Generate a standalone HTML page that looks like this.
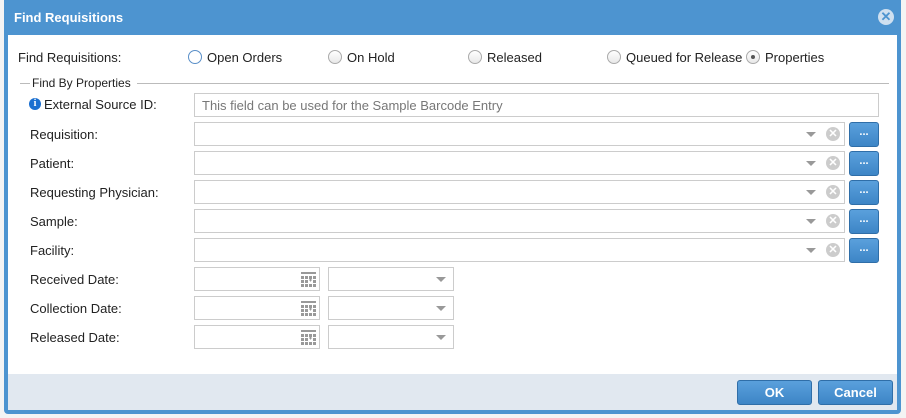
<!DOCTYPE html>
<html><head><style>
*{box-sizing:border-box;margin:0;padding:0}
body{width:906px;height:418px;overflow:hidden;background:#f4f4f4;font-family:"Liberation Sans",sans-serif;font-size:13px;color:#222;position:relative}
.a{position:absolute}
.dlg{left:4px;top:0;width:897px;height:414px;background:#4d94d0;border-radius:0 0 4px 4px}
.body{left:8px;top:35px;width:889px;height:339px;background:#fff}
.foot{left:8px;top:374px;width:889px;height:36px;background:#e1e8f0}
.title{left:14px;top:10px;color:#fff;font-weight:bold;font-size:13px}
.lbl{left:30px}
.inp{border:1px solid #ccc;background:#fff;height:24px}
.rad{width:14px;height:14px;border-radius:50%;border:1px solid #aaa;background:linear-gradient(#fff,#e8e8e8)}
.btn{width:30px;height:25px;background:linear-gradient(#5aa0dc,#3d85c6);border:1px solid #2f6ea8;border-radius:3px;color:#fff;font-weight:bold;text-align:center;line-height:18px;font-size:11px}
.clr{width:14px;height:14px;border-radius:50%;background:#ccc;color:#fff;font-size:11px;line-height:14px;text-align:center;font-weight:bold}
.tri{width:0;height:0;border-left:5px solid transparent;border-right:5px solid transparent;border-top:5px solid #999}
.ok{height:25px;background:linear-gradient(#5aa0dc,#3d85c6);border:1px solid #2f6ea8;border-radius:3px;color:#fff;font-weight:bold;text-align:center;line-height:23px;font-size:13px}
</style></head><body>
<div class="a dlg"></div>
<div class="a body"></div>
<div class="a foot"></div>
<div class="a title">Find Requisitions</div>
<div class="a" style="left:878px;top:9px;width:16px;height:16px;border-radius:50%;background:#cfe0f0;color:#4d94d0;font-size:13px;line-height:16px;text-align:center;font-weight:bold">✕</div>

<div class="a" style="left:18px;top:50px">Find Requisitions:</div>
<div class="a rad" style="left:188px;top:50px;border-color:#5a8fc8;background:#fff"></div><div class="a" style="left:207px;top:50px">Open Orders</div>
<div class="a rad" style="left:328px;top:50px"></div><div class="a" style="left:347px;top:50px">On Hold</div>
<div class="a rad" style="left:468px;top:50px"></div><div class="a" style="left:487px;top:50px">Released</div>
<div class="a rad" style="left:607px;top:50px"></div><div class="a" style="left:626px;top:50px">Queued for Release</div>
<div class="a rad" style="left:746px;top:50px"><div class="a" style="left:4px;top:4px;width:4px;height:4px;border-radius:50%;background:#555"></div></div><div class="a" style="left:765px;top:50px">Properties</div>

<div class="a" style="left:20px;top:83px;width:10px;border-top:1px solid #bbb"></div>
<div class="a" style="left:32px;top:76px;font-size:12px">Find By Properties</div>
<div class="a" style="left:137px;top:83px;width:752px;border-top:1px solid #bbb"></div>

<div class="a" style="left:29px;top:98px;width:12px;height:12px;border-radius:50%;background:#1a6fd0;color:#fff;font-size:10px;line-height:12px;text-align:center;font-weight:bold;font-family:'Liberation Serif',serif">i</div>
<div class="a" style="left:44px;top:97px">External Source ID:</div>
<div class="a inp" style="left:194px;top:93px;width:685px;color:#777;padding:4px 7px">This field can be used for the Sample Barcode Entry</div>

<div class="a lbl" style="top:127px">Requisition:</div>
<div class="a lbl" style="top:156px">Patient:</div>
<div class="a lbl" style="top:185px">Requesting Physician:</div>
<div class="a lbl" style="top:214px">Sample:</div>
<div class="a lbl" style="top:243px">Facility:</div>
<div class="a lbl" style="top:272px">Received Date:</div>
<div class="a lbl" style="top:301px">Collection Date:</div>
<div class="a lbl" style="top:330px">Released Date:</div>

<div class="a inp" style="left:194px;top:122px;width:651px"></div><div class="a tri" style="left:806px;top:132px"></div><div class="a clr" style="left:826px;top:127px">✕</div><div class="a btn" style="left:849px;top:122px">...</div>
<div class="a inp" style="left:194px;top:151px;width:651px"></div><div class="a tri" style="left:806px;top:161px"></div><div class="a clr" style="left:826px;top:156px">✕</div><div class="a btn" style="left:849px;top:151px">...</div>
<div class="a inp" style="left:194px;top:180px;width:651px"></div><div class="a tri" style="left:806px;top:190px"></div><div class="a clr" style="left:826px;top:185px">✕</div><div class="a btn" style="left:849px;top:180px">...</div>
<div class="a inp" style="left:194px;top:209px;width:651px"></div><div class="a tri" style="left:806px;top:219px"></div><div class="a clr" style="left:826px;top:214px">✕</div><div class="a btn" style="left:849px;top:209px">...</div>
<div class="a inp" style="left:194px;top:238px;width:651px"></div><div class="a tri" style="left:806px;top:248px"></div><div class="a clr" style="left:826px;top:243px">✕</div><div class="a btn" style="left:849px;top:238px">...</div>

<svg class="a" style="left:0;top:0" width="906" height="418">
<defs><g id="cal" fill="#999"><rect x="0" y="0" width="15" height="2"/><rect x="0" y="4" width="3" height="3"/><rect x="4" y="4" width="3" height="3"/><rect x="8" y="4" width="3" height="3"/><rect x="12" y="4" width="3" height="3"/><rect x="0" y="8" width="3" height="3"/><rect x="4" y="8" width="3" height="3"/><rect x="12" y="8" width="3" height="3"/><rect x="8" y="7.5" width="3" height="1"/><rect x="9" y="6.5" width="1" height="3"/><rect x="0" y="12" width="3" height="3"/><rect x="4" y="12" width="3" height="3"/><rect x="8" y="12" width="3" height="3"/><rect x="12" y="12" width="3" height="3"/></g></defs>
</svg>
<div class="a inp" style="left:194px;top:267px;width:126px"></div><div class="a inp" style="left:328px;top:267px;width:126px"></div>
<div class="a inp" style="left:194px;top:296px;width:126px"></div><div class="a inp" style="left:328px;top:296px;width:126px"></div>
<div class="a inp" style="left:194px;top:325px;width:126px"></div><div class="a inp" style="left:328px;top:325px;width:126px"></div>
<div class="a tri" style="left:436px;top:277px"></div><div class="a tri" style="left:436px;top:306px"></div><div class="a tri" style="left:436px;top:335px"></div>
<svg class="a" style="left:0;top:0" width="906" height="418">
<use href="#cal" x="301" y="272"/><use href="#cal" x="301" y="301"/><use href="#cal" x="301" y="330"/>
</svg>

<div class="a ok" style="left:737px;top:380px;width:75px">OK</div>
<div class="a ok" style="left:818px;top:380px;width:75px">Cancel</div>
</body></html>
